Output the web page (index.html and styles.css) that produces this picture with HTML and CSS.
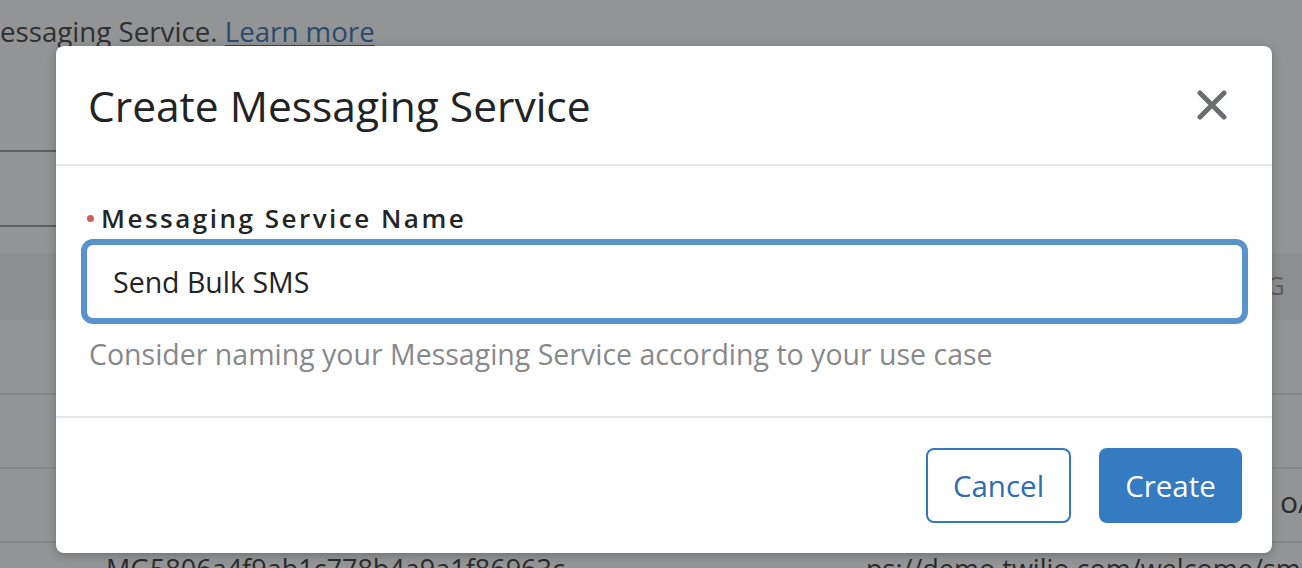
FILE: index.html
```html
<!DOCTYPE html>
<html>
<head>
<meta charset="utf-8">
<link rel="stylesheet" href="styles.css">
</head>
<body>
<div class="page">
  <div class="intro"><span class="intro-text">essaging Service. <a class="learn">Learn more</a></span></div>
  <div class="rule-dark"></div>
  <div class="row"></div>
  <div class="rule-dark"></div>
  <div class="gap"></div>
  <div class="thead"><span class="cut-g">G</span></div>
  <div class="row"></div>
  <div class="rule"></div>
  <div class="row r72"></div>
  <div class="rule"></div>
  <div class="row r72 row-o"><span class="cut-o">o/</span></div>
  <div class="rule"></div>
  <div class="row last"><span class="sid">MG5806a4f9ab1c778b4a9a1f86963c</span><span class="sid2">ps://demo.twilio.com/welcome/sms</span></div>
</div>

<div class="modal">
  <div class="modal-header">
    <h2 class="modal-title">Create Messaging Service</h2>
    <button class="close" aria-label="Close">
      <svg width="30" height="30" viewBox="0 0 30 30"><path d="M3 3 L27 27 M27 3 L3 27" stroke="#6b6e71" stroke-width="5" stroke-linecap="round" fill="none"/></svg>
    </button>
  </div>
  <div class="modal-body">
    <label class="field-label"><span class="req"></span>Messaging Service Name</label>
    <div class="input">Send Bulk SMS</div>
    <p class="help">Consider naming your Messaging Service according to your use case</p>
  </div>
  <div class="modal-footer">
    <button class="btn btn-secondary">Cancel</button>
    <button class="btn btn-primary">Create</button>
  </div>
</div>
</body>
</html>
```
FILE: styles.css
```css
html, body {
  margin: 0;
  padding: 0;
}
body {
  width: 1302px;
  height: 568px;
  overflow: hidden;
  background: #939495;
  font-family: "Open Sans", Lato, sans-serif;
  position: relative;
}
.page {
  display: flex;
  flex-direction: column;
}
.intro {
  height: 150px;
  position: relative;
}
.intro-text {
  display: block;
  margin-left: 0;
  padding-top: 13px;
  font-size: 27.7px;
  line-height: 36px;
  color: #2f3031;
  white-space: nowrap;
}
.learn {
  color: #2b4a6c;
  text-decoration: underline;
  text-underline-offset: 3px;
}
.rule-dark {
  height: 2px;
  width: 120px;
  background: #5e5f60;
}
.row {
  height: 73px;
  position: relative;
}
.r72 { height: 72px; }
.gap { height: 26px; }
.thead {
  height: 67px;
  background: #8d8e8f;
  position: relative;
}
.rule {
  height: 2px;
  background: #87888a;
}
.cut-g {
  position: absolute;
  left: 1266px;
  top: 14px;
  font-size: 26px;
  color: #5c5d5e;
}
.cut-o {
  position: absolute;
  left: 1280px;
  top: 12px;
  font-size: 30px;
  color: #2a2b2c;
}
.last {
  height: 40px;
}
.sid, .sid2 {
  position: absolute;
  top: 7px;
  font-size: 27px;
  color: #2a2b2c;
  white-space: nowrap;
}
.sid { left: 106px; }
.sid2 { left: 866px; }

.modal {
  position: absolute;
  left: 56px;
  top: 46px;
  width: 1216px;
  height: 507px;
  background: #fff;
  border-radius: 8px;
  box-shadow: 0 2px 10px rgba(0, 0, 0, 0.25);
  display: flex;
  flex-direction: column;
}
.modal-header {
  height: 120px;
  box-sizing: border-box;
  border-bottom: 2px solid #e6e7e8;
  display: flex;
  align-items: center;
  justify-content: space-between;
  padding: 0 45px 0 32px;
}
.modal-title {
  margin: 0;
  font-size: 42.5px;
  font-weight: 400;
  color: #222324;
}
.close {
  border: 0;
  background: none;
  padding: 0;
  width: 30px;
  height: 30px;
  display: flex;
}
.modal-body {
  height: 252px;
  border-bottom: 2px solid #e6e7e8;
  padding: 34px 24px 0 25px;
  box-sizing: border-box;
}
.field-label {
  display: flex;
  align-items: center;
  font-size: 26px;
  font-weight: 600;
  letter-spacing: 2.5px;
  color: #242526;
  height: 36px;
  padding-left: 6px;
}
.req {
  width: 7px;
  height: 7px;
  border-radius: 50%;
  background: #d45c57;
  margin-right: 7px;
}
.input {
  margin-top: 3px;
  height: 85px;
  box-sizing: border-box;
  border: 6px solid #5993cc;
  border-radius: 12px;
  padding: 0 26px;
  display: flex;
  align-items: center;
  font-size: 28.5px;
  color: #222324;
}
.help {
  margin: 11px 0 0 8px;
  font-size: 28.5px;
  color: #88898b;
}
.modal-footer {
  flex: 1;
  display: flex;
  justify-content: flex-end;
  align-items: flex-start;
  gap: 28px;
  padding: 30px 30px 0 0;
}
.btn {
  height: 75px;
  box-sizing: border-box;
  border-radius: 8px;
  font-family: "Open Sans", Lato, sans-serif;
  font-size: 29.5px;
  font-weight: 400;
  padding: 0;
}
.btn-secondary {
  width: 145px;
  background: #fff;
  border: 2px solid #3479bf;
  color: #2e6db0;
}
.btn-primary {
  width: 143px;
  background: #347bc1;
  border: 0;
  color: #fff;
}
```
